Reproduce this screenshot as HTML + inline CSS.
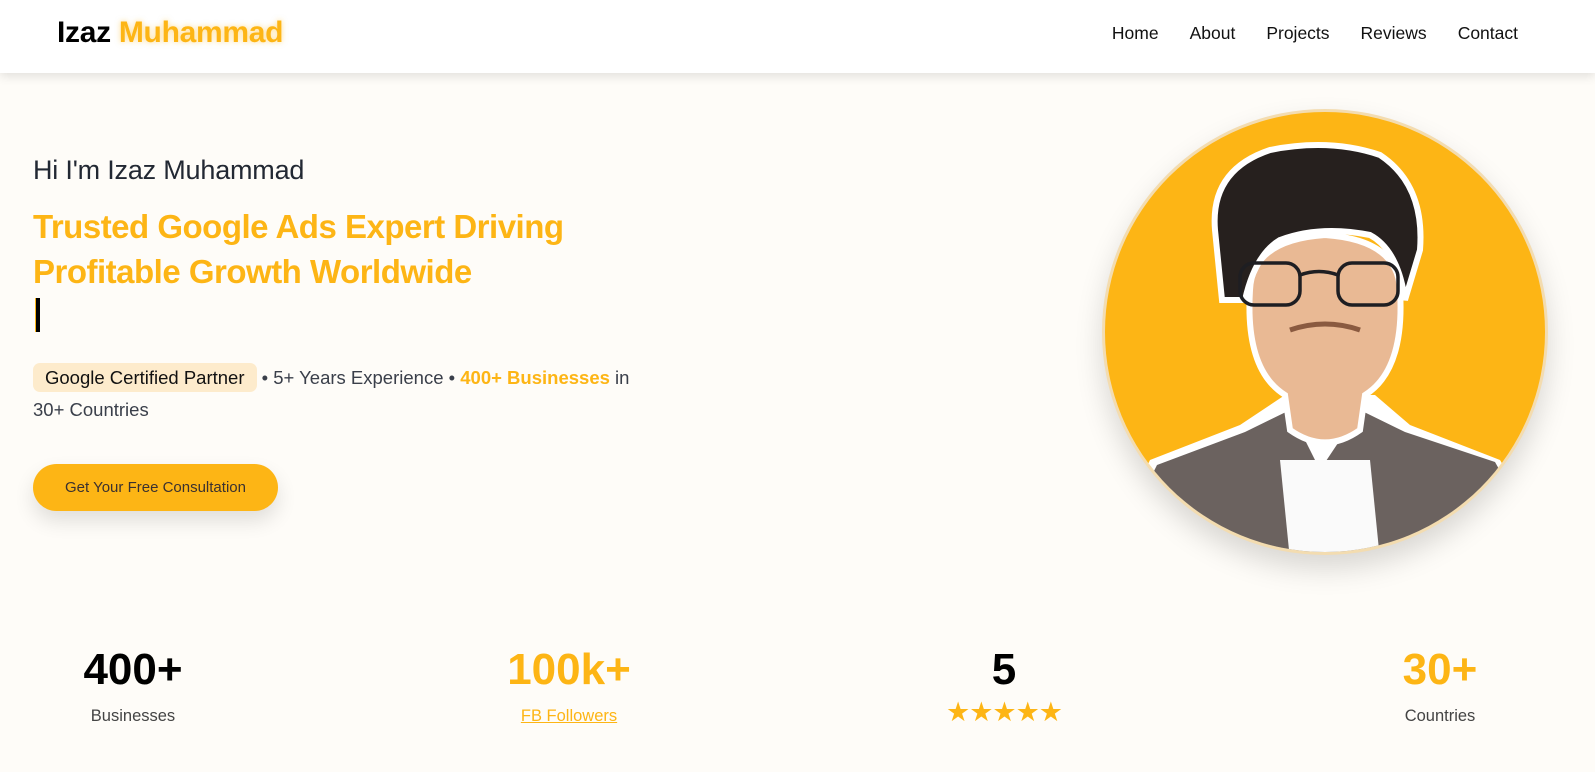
<!DOCTYPE html>
<html><head><meta charset="utf-8"><style>
*{margin:0;padding:0;box-sizing:border-box}
body{width:1595px;height:772px;overflow:hidden;font-family:"Liberation Sans",sans-serif;background:#fefcf8;position:relative}
.nav{position:absolute;left:0;top:0;width:1595px;height:73px;background:#fff;box-shadow:0 3px 10px rgba(0,0,0,.12);z-index:2}
.logo{position:absolute;left:57px;top:16px;font-size:30px;font-weight:bold;letter-spacing:-.3px}
.logo span{color:#fdb515;text-shadow:0 0 6px rgba(253,181,21,.5)}
.menu{position:absolute;right:77px;top:23px;font-size:17.5px;color:#111}
.menu a{margin-left:31px;color:#111;text-decoration:none}
.abs{position:absolute}
.hi{left:33px;top:155px;font-size:27px;color:#222833;letter-spacing:-.2px}
.h1{left:33px;top:204px;font-size:33px;font-weight:bold;color:#fdb515;line-height:45px;letter-spacing:-.5px}
.cur{left:35px;top:298px;width:5px;height:34px;background:#000;border-left:1px solid #fdb515}
.line{left:33px;top:362px;font-size:18.5px;color:#3a3f4a;line-height:32px;width:680px}
.badge{background:#fdebcc;border-radius:7px;padding:4px 12px;color:#111}
.btn{left:33px;top:464px;width:245px;height:47px;border-radius:24px;background:#fdb515;color:#3a3130;font-size:15px;text-align:center;line-height:47px;box-shadow:0 10px 20px rgba(0,0,0,.12)}
.stat{position:absolute;top:643px;text-align:center;width:240px}
.stat b{display:block;font-size:44px;line-height:54px}
.stat i{font-style:normal;font-size:16.5px;color:#444;display:block;margin-top:10px}
.circ{position:absolute;left:1102px;top:109px;width:446px;height:446px;border-radius:50%;box-shadow:0 14px 28px rgba(0,0,0,.15);background:#f3dcb0}
</style></head><body>
<div class="nav"><div class="logo">Izaz <span>Muhammad</span></div>
<div class="menu"><a>Home</a><a>About</a><a>Projects</a><a>Reviews</a><a>Contact</a></div></div>
<div class="abs hi">Hi I'm Izaz Muhammad</div>
<div class="abs h1">Trusted Google Ads Expert Driving<br>Profitable Growth Worldwide</div>
<div class="abs cur"></div>
<div class="abs line"><span class="badge">Google Certified Partner</span> • 5+ Years Experience • <b style="color:#fdb515">400+ Businesses</b> in<br>30+ Countries</div>
<div class="abs btn">Get Your Free Consultation</div>
<div class="circ"></div>
<svg class="abs" style="left:1102px;top:109px" width="446" height="446" viewBox="1102 109 446 446">
<defs><clipPath id="c"><circle cx="1325" cy="332" r="220"/></clipPath></defs>
<circle cx="1325" cy="332" r="220" fill="#fdb515"/>
<g clip-path="url(#c)">
<path d="M1150 460 L1240 425 L1285 395 L1375 395 L1410 425 L1500 460 L1560 560 L1100 560Z" fill="#fff"/>
<path d="M1157 465 L1245 432 L1290 410 L1320 470 L1360 410 L1405 432 L1495 462 L1550 560 L1110 560Z" fill="#6b625f"/>
<path d="M1280 460 L1370 460 L1380 560 L1290 560Z" fill="#fafafa"/>
<path d="M1250 290 Q1245 370 1285 395 L1290 430 Q1325 455 1360 430 L1365 395 Q1405 370 1400 290 Q1398 240 1325 235 Q1252 240 1250 290Z" fill="#e9b994" stroke="#fff" stroke-width="6"/>
<path d="M1222 300 L1215 230 Q1210 170 1270 150 Q1330 138 1380 155 Q1425 185 1420 250 L1405 300 Q1398 250 1370 235 Q1320 225 1280 240 Q1255 255 1245 300 Z" fill="#26201e" stroke="#fff" stroke-width="6"/>
<g fill="none" stroke="#1e1e22" stroke-width="3.5"><rect x="1240" y="263" width="60" height="42" rx="14"/><rect x="1338" y="263" width="60" height="42" rx="14"/><path d="M1300 275 Q1319 268 1338 275"/></g>
<path d="M1290 330 Q1325 318 1360 330" stroke="#8a5a40" stroke-width="5" fill="none"/>
</g>
</svg>
<div class="stat" style="left:13px"><b>400+</b><i>Businesses</i></div>
<div class="stat" style="left:449px"><b style="color:#fdb515">100k+</b><i style="color:#fdb515;text-decoration:underline">FB Followers</i></div>
<div class="stat" style="left:884px"><b>5</b><i style="color:#fdb515;font-size:27px;margin-top:2px;line-height:26px;letter-spacing:-1px">★★★★★</i></div>
<div class="stat" style="left:1320px"><b style="color:#fdb515">30+</b><i>Countries</i></div>
</body></html>
